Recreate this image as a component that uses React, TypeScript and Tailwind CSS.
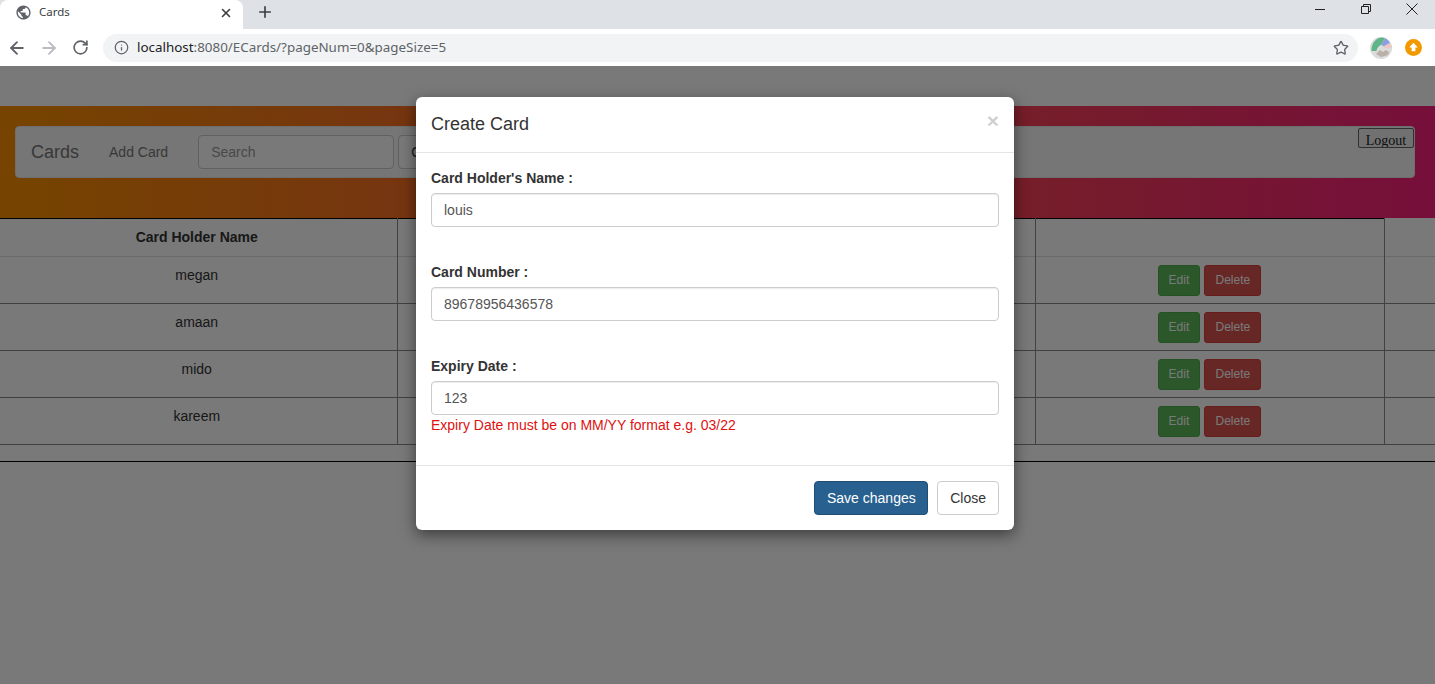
import React from "react";
import { ArrowLeft, ArrowRight, RotateCw, Info, Star, X, Plus } from "lucide-react";

const rows = ["megan", "amaan", "mido", "kareem"];

function Field({ label, value, gap }: { label: string; value: string; gap: string }) {
  return (
    <div className={gap}>
      <label className="block mb-[5px] font-bold text-[14px] leading-[20px] text-[#333]">{label}</label>
      <div className="h-[34px] border border-[#ccc] rounded-[4px] px-[12px] text-[14px] leading-[32px] text-[#555] shadow-[inset_0_1px_1px_rgba(0,0,0,0.075)]">
        {value}
      </div>
    </div>
  );
}

export default function App() {
  return (
    <div className="w-[1435px] h-[684px] overflow-hidden flex flex-col bg-white font-['Liberation_Sans',sans-serif]">
      {/* Browser tab strip */}
      <div className="h-[29px] shrink-0 bg-[#dee1e6] flex items-start relative">
        <div className="w-[243px] h-[29px] bg-white rounded-t-[8px] flex items-center pl-[15px] pr-[10px] font-['Noto_Sans',sans-serif] text-[12px] text-[#3c4043]">
          <svg viewBox="0 0 24 24" className="w-[17px] h-[17px] shrink-0 mt-[-5px] fill-[#5f6368]">
            <path d="M12 2C6.48 2 2 6.48 2 12s4.48 10 10 10 10-4.48 10-10S17.52 2 12 2zm-1 17.93c-3.95-.49-7-3.85-7-7.93 0-.62.08-1.21.21-1.79L9 15v1c0 1.1.9 2 2 2v1.93zm6.9-2.54c-.26-.81-1-1.39-1.9-1.39h-1v-3c0-.55-.45-1-1-1H8v-2h2c.55 0 1-.45 1-1V7h2c1.1 0 2-.9 2-2v-.41c2.93 1.19 5 4.06 5 7.41 0 2.08-.8 3.97-2.1 5.39z" />
          </svg>
          <span className="ml-[7px] flex-1 mt-[-5px] text-[11.5px]">Cards</span>
          <X size={14} strokeWidth={2.8} className="text-[#3c4043] mt-[-4px]" />
        </div>
        <Plus size={18} strokeWidth={2.2} className="ml-[13px] mt-[3px] text-[#3c4043]" />
        <div className="ml-auto flex items-start h-[18px]">
          <div className="w-[10px] h-px bg-[#222] mt-[9px] mr-[36px]" />
          <svg viewBox="0 0 10 10" className="w-[10px] h-[10px] mt-[4px] mr-[35px] fill-none stroke-[#222]">
            <path d="M0.5 2.5h7v7h-7z M2.5 2.5v-2h7v7h-2" />
          </svg>
          <svg viewBox="0 0 12 12" className="w-[12px] h-[12px] mt-[3px] mr-[17px] fill-none stroke-[#222]">
            <path d="M0.5 0.5L11.5 11.5M11.5 0.5L0.5 11.5" />
          </svg>
        </div>
      </div>
      {/* Browser toolbar */}
      <div className="h-[37px] shrink-0 bg-white flex items-center pl-[7px]">
        <ArrowLeft size={20} strokeWidth={2.2} className="text-[#5f6368]" />
        <ArrowRight size={20} strokeWidth={2.2} className="ml-[12px] text-[#b9bcc0]" />
        <RotateCw size={17} strokeWidth={2.4} className="ml-[13px] mt-[-1px] text-[#5f6368]" />
        <div className="ml-[14px] w-[1255px] h-[28px] rounded-full bg-[#f1f3f4] flex items-center pl-[11px] pr-[9px] font-['Noto_Sans',sans-serif] text-[13.4px] text-[#5f6368]">
          <Info size={15} strokeWidth={2} className="text-[#5f6368]" />
          <span className="ml-[8px] flex-1 whitespace-nowrap">
            <span className="text-[#202124]">localhost</span>:8080/ECards/?pageNum=0&amp;pageSize=5
          </span>
          <Star size={16} strokeWidth={2} className="text-[#5f6368]" />
        </div>
        <svg viewBox="0 0 22 22" className="ml-[12px] w-[22px] h-[22px]">
          <circle cx="11" cy="11" r="11" fill="#dddcdc" />
          <path d="M1.5 14C1 7 6 1 11 0.5c1.500 0 3 .3 4 .8L11 8c-2 .5-4 3-4.500 6z" fill="#5fb58a" />
          <path d="M15 1.300l-4 6.700c1 0 2 .5 2.500 1.500L20 6c-1-2-3-3.800-5-4.700z" fill="#8a9fe0" />
          <path d="M20 6l-6.500 3.500c.4.600.5 1 .5 1.500h8c0-1.800-.7-3.500-2-5z" fill="#e8c9c4" />
          <path d="M6 17l4-4 3 2 3-2 3 2-1 3-7 2z" fill="#b9b0a8" />
        </svg>
        <svg viewBox="0 0 16 16" className="ml-[13px] w-[17px] h-[17px]">
          <circle cx="8" cy="8" r="8" fill="#f29900" />
          <path d="M8 3.500L12 8H9.800v3.500H6.200V8H4z" fill="#fff" />
        </svg>
      </div>

      {/* Page */}
      <div className="relative flex-1 bg-white font-['Liberation_Sans',sans-serif] text-[14px] text-[#333]">
        <div className="h-[40px]" />
        <div className="h-[112px] pt-[20px] pl-[15px] pr-[20px] bg-linear-to-r/srgb from-[#f89000] to-[#f8207c]">
          <div className="h-[52px] bg-[#f8f8f8] border border-[#e7e7e7] rounded-[4px] flex items-start relative">
            <span className="ml-[15px] mt-[15px] text-[18px] leading-[20px] text-[#777]">Cards</span>
            <span className="ml-[30px] mt-[15px] leading-[20px] text-[#777]">Add Card</span>
            <div className="ml-[30px] mt-[8px] w-[196px] h-[34px] border border-[#ccc] rounded-[4px] bg-white px-[12px] leading-[32px] text-[#999]">
              Search
            </div>
            <div className="ml-[4px] mt-[8px] w-[70px] h-[34px] border border-[#ccc] rounded-[4px] bg-white px-[12px] leading-[32px] text-[#333]">
              Clear
            </div>
            <div className="ml-auto mr-[0px] mt-[1px] w-[56px] h-[20px] border border-[#666] rounded-[2px] bg-[#efefef] overflow-hidden text-center font-['Liberation_Serif',serif] text-[14px] leading-[23px] text-[#222]">
              Logout
            </div>
          </div>
        </div>
        <table className="w-full table-fixed border-collapse text-center">
          <colgroup>
            <col className="w-[397px]" />
            <col className="w-[638px]" />
            <col className="w-[349px]" />
            <col />
          </colgroup>
          <thead>
            <tr className="h-[38px]">
              <th className="border-t border-r border-t-black border-r-[#8a8a8a] font-bold pr-[3px]">Card Holder Name</th>
              <th className="border-t border-r border-t-black border-r-[#8a8a8a]" />
              <th className="border-t border-r border-t-black border-r-[#8a8a8a]" />
              <th />
            </tr>
          </thead>
          <tbody>
            {rows.map((name) => (
              <tr key={name} className="h-[47px]">
                <td className="border-t border-t-[#ddd] border-r border-r-[#8a8a8a] align-top pt-[8px] pr-[3px] leading-[20px] border-b border-b-[#8a8a8a]">{name}</td>
                <td className="border-t border-t-[#ddd] border-r border-r-[#8a8a8a] border-b border-b-[#8a8a8a]" />
                <td className="border-t border-t-[#ddd] border-r border-r-[#8a8a8a] border-b border-b-[#8a8a8a] align-top pt-[8px]">
                  <div className="flex justify-center gap-[4px]">
                    <div className="h-[31px] px-[10px] rounded-[3px] bg-[#5cb85c] border border-[#4cae4c] text-white text-[12px] leading-[29px]">Edit</div>
                    <div className="h-[31px] px-[10.25px] rounded-[3px] bg-[#d9534f] border border-[#d43f3a] text-white text-[12px] leading-[29px]">Delete</div>
                  </div>
                </td>
                <td className="border-t border-t-[#ddd] border-b border-b-[#8a8a8a]" />
              </tr>
            ))}
            <tr className="h-[17px]">
              <td colSpan={4} className="border-b border-b-black" />
            </tr>
          </tbody>
        </table>

        {/* Backdrop */}
        <div className="absolute inset-0 bg-black/[.525]" />

        {/* Modal */}
        <div className="absolute left-[416px] top-[31px] w-[598px] bg-white rounded-[6px] shadow-[0_5px_15px_rgba(0,0,0,0.5)]">
          <div className="h-[56px] border-b border-[#e5e5e5] px-[15px] pt-[14px] flex items-start justify-between">
            <span className="text-[18px] leading-[26px] text-[#333]">Create Card</span>
            <span className="text-[21px] leading-[17px] mt-px font-bold text-black/20">×</span>
          </div>
          <div className="px-[15px] pt-[15px] pb-[30px]">
            <Field label="Card Holder's Name :" value="louis" gap="mb-[35px]" />
            <Field label="Card Number :" value="89678956436578" gap="mb-[35px]" />
            <Field label="Expiry Date :" value="123" gap="" />
            <div className="leading-[20px] text-[14px] text-[#e01010]">Expiry Date must be on MM/YY format e.g. 03/22</div>
          </div>
          <div className="border-t border-[#e5e5e5] p-[15px] flex justify-end gap-[9px]">
            <div className="h-[34px] px-[11.5px] rounded-[4px] bg-[#286090] border border-[#204d74] text-white leading-[32px]">Save changes</div>
            <div className="h-[34px] px-[12px] rounded-[4px] bg-white border border-[#ccc] text-[#333] leading-[32px]">Close</div>
          </div>
        </div>
      </div>
    </div>
  );
}
